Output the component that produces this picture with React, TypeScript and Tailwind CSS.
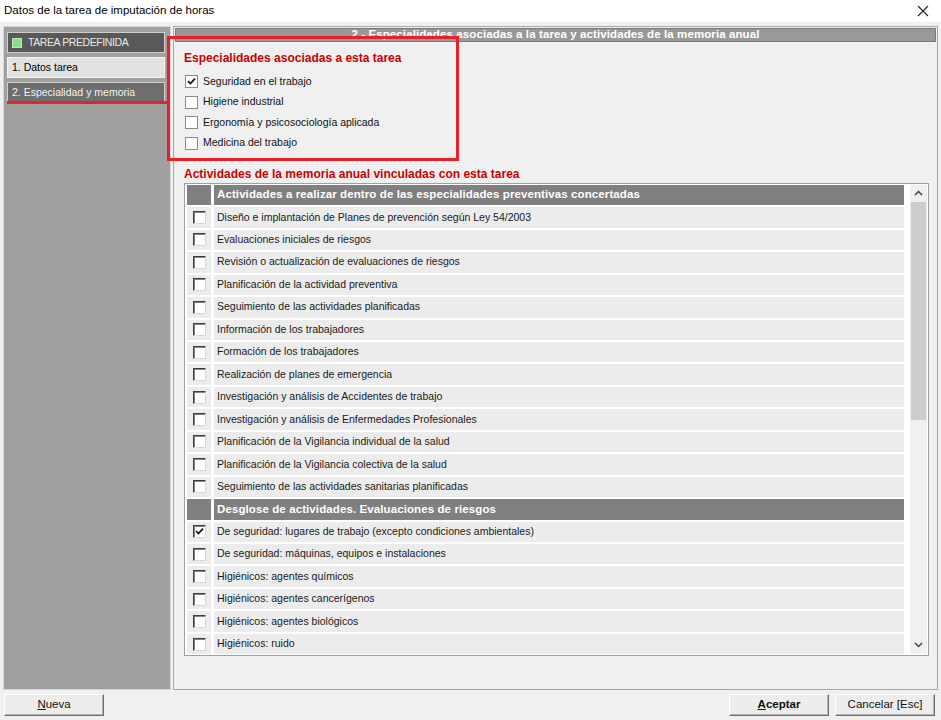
import React from "react";

const group1 = [
  "Diseño e implantación de Planes de prevención según Ley 54/2003",
  "Evaluaciones iniciales de riesgos",
  "Revisión o actualización de evaluaciones de riesgos",
  "Planificación de la actividad preventiva",
  "Seguimiento de las actividades planificadas",
  "Información de los trabajadores",
  "Formación de los trabajadores",
  "Realización de planes de emergencia",
  "Investigación y análisis de Accidentes de trabajo",
  "Investigación y análisis de Enfermedades Profesionales",
  "Planificación de la Vigilancia individual de la salud",
  "Planificación de la Vigilancia colectiva de la salud",
  "Seguimiento de las actividades sanitarias planificadas",
];

const group2 = [
  "De seguridad: lugares de trabajo (excepto condiciones ambientales)",
  "De seguridad: máquinas, equipos e instalaciones",
  "Higiénicos: agentes químicos",
  "Higiénicos: agentes cancerígenos",
  "Higiénicos: agentes biológicos",
  "Higiénicos: ruido",
];

function Check({ checked, small }: { checked?: boolean; small?: boolean }) {
  return (
    <div
      className={
        small
          ? "w-[13px] h-[13px] bg-white border border-[#8a8a8a] flex items-center justify-center shrink-0"
          : "w-[13px] h-[13px] bg-white border-t border-l border-[#404040] border-r border-b border-r-[#d8d8d8] border-b-[#d8d8d8] flex items-center justify-center shrink-0 shadow-[inset_1px_1px_0_#808080]"
      }
    >
      {checked && (
        <svg width="9" height="9" viewBox="0 0 9 9">
          <path d="M1 4.2 L3.4 6.6 L8 1.6" stroke="#111" strokeWidth="1.7" fill="none" />
        </svg>
      )}
    </div>
  );
}

function Row({ text, checked }: { text: string; checked?: boolean }) {
  return (
    <div className="flex h-[20.46px] gap-[3px] shrink-0">
      <div className="w-[24px] bg-[#ececec] flex items-center justify-center">
        <Check checked={checked} />
      </div>
      <div className="flex-1 bg-[#ececec] flex items-center pl-[3px] text-[10.5px] text-[#1a1a1a] whitespace-nowrap">
        {text}
      </div>
    </div>
  );
}

function Header({ text }: { text: string }) {
  return (
    <div className="flex h-[20.46px] gap-[3px] shrink-0">
      <div className="w-[24px] bg-[#808080]" />
      <div className="flex-1 bg-[#808080] flex items-center pl-[3px] text-[11.5px] font-bold text-white whitespace-nowrap tracking-[0.1px]">
        {text}
      </div>
    </div>
  );
}

function Btn({ children, bold }: { children: React.ReactNode; bold?: boolean }) {
  return (
    <div
      className={
        "h-[22px] w-[100px] bg-[#ededed] border border-t-[#ffffff] border-l-[#ffffff] border-r-[#6e6e6e] border-b-[#6e6e6e] shadow-[inset_-1px_-1px_0_#b4b4b4] flex items-center justify-center text-[11.5px] text-[#111] " +
        (bold ? "font-bold" : "")
      }
    >
      {children}
    </div>
  );
}

export default function App() {
  return (
    <div
      className="w-[941px] h-[720px] bg-[#f0f0f0] relative overflow-hidden flex flex-col"
      style={{ fontFamily: '"Liberation Sans", Arial, sans-serif' }}
    >
      {/* title bar */}
      <div className="h-[22px] bg-white flex items-center justify-between pl-[4px] pr-[8px] shrink-0">
        <span className="text-[11.5px] text-black">Datos de la tarea de imputación de horas</span>
        <svg width="12" height="12" viewBox="0 0 12 12" className="mr-[4px]">
          <path d="M1 1 L11 11 M11 1 L1 11" stroke="#222" strokeWidth="1.1" />
        </svg>
      </div>

      {/* body */}
      <div className="flex flex-1 min-h-0 px-[3px] pt-[4px] gap-[2px]">
        {/* left panel */}
        <div className="w-[168px] bg-[#a0a0a0] border border-[#d6d6d6] flex flex-col gap-[4px] pl-[3px] pr-[5px] pt-[5px]">
          <div className="h-[21px] bg-[#595959] border border-[#cfcfcf] flex items-center pl-[4px] gap-[6px] text-[10.5px] text-[#e8e8e8] tracking-[-0.4px]">
            <div className="w-[10px] h-[10px] bg-[#8ddb8d] border border-[#b9e8b9]" />
            <span>TAREA PREDEFINIDA</span>
          </div>
          <div className="h-[21px] bg-[#e2e2e2] border border-[#f4f4f4] flex items-center pl-[4px] text-[10.5px] text-black">
            1. Datos tarea
          </div>
          <div className="h-[21px] bg-[#6e6e6e] border border-[#d0d0d0] flex items-center pl-[4px] text-[10.5px] text-[#f2f2f2]">
            2. Especialidad y memoria
          </div>
        </div>

        {/* right panel */}
        <div className="flex-1 border border-[#a8a8a8] bg-[#f0f0f0] flex flex-col">
          <div className="h-[14px] mx-[1px] mt-[1px] bg-[#999999] border border-[#7a7a7a] flex items-center justify-center text-[11.5px] font-bold text-white leading-none tracking-[0.1px]">
            2 - Especialidades asociadas a la tarea y actividades de la memoria anual
          </div>
          <div className="pl-[10px] pr-[8px] flex flex-col flex-1 min-h-0">
            <div className="mt-[8px] text-[12px] font-bold text-[#cc0000] leading-[16px]">
              Especialidades asociadas a esta tarea
            </div>
            <div className="mt-[9px] flex flex-col gap-[7.6px]">
              {[
                ["Seguridad en el trabajo", true],
                ["Higiene industrial", false],
                ["Ergonomía y psicosociología aplicada", false],
                ["Medicina del trabajo", false],
              ].map(([t, c]) => (
                <div key={t as string} className="flex items-center gap-[5px] h-[13px] pl-[1px]">
                  <Check checked={c as boolean} small />
                  <span className="text-[10.5px] text-[#111]">{t as string}</span>
                </div>
              ))}
            </div>
            <div className="mt-[16px] text-[12px] font-bold text-[#cc0000] leading-[16px]">
              Actividades de la memoria anual vinculadas con esta tarea
            </div>
            <div className="mt-[1px] h-[473px] border border-[#a0a0a0] bg-white flex p-[1px] pl-[2px]">
              <div className="flex-1 flex flex-col gap-[2px] overflow-hidden">
                <Header text="Actividades a realizar dentro de las especialidades preventivas concertadas" />
                {group1.map((t) => (
                  <Row key={t} text={t} />
                ))}
                <Header text="Desglose de actividades. Evaluaciones de riesgos" />
                {group2.map((t, i) => (
                  <Row key={t} text={t} checked={i === 0} />
                ))}
              </div>
              {/* scrollbar */}
              <div className="w-[17px] ml-[6px] bg-[#f0f0f0] flex flex-col items-center">
                <div className="h-[17px] flex items-center justify-center">
                  <svg width="9" height="6" viewBox="0 0 9 6">
                    <path d="M1 5 L4.5 1.5 L8 5" stroke="#444" strokeWidth="1.5" fill="none" />
                  </svg>
                </div>
                <div className="w-[15px] h-[218px] bg-[#cdcdcd]" />
                <div className="flex-1" />
                <div className="h-[17px] flex items-center justify-center">
                  <svg width="9" height="6" viewBox="0 0 9 6">
                    <path d="M1 1 L4.5 4.5 L8 1" stroke="#444" strokeWidth="1.5" fill="none" />
                  </svg>
                </div>
              </div>
            </div>
          </div>
        </div>
      </div>

      {/* bottom buttons */}
      <div className="h-[30px] flex items-center justify-between px-[4px] shrink-0">
        <Btn>
          <span>
            <u>N</u>ueva
          </span>
        </Btn>
        <div className="flex gap-[6px] pr-[2px]">
          <Btn bold>
            <span>
              <u>A</u>ceptar
            </span>
          </Btn>
          <Btn>Cancelar [Esc]</Btn>
        </div>
      </div>

      {/* red annotation overlays */}
      <div className="absolute left-[167px] top-[36px] w-[292px] h-[125px] border-[3px] border-[#e8202a] pointer-events-none" />
      <div className="absolute left-[7px] top-[101px] w-[162px] h-[3px] bg-[#e8202a] pointer-events-none" />
    </div>
  );
}
